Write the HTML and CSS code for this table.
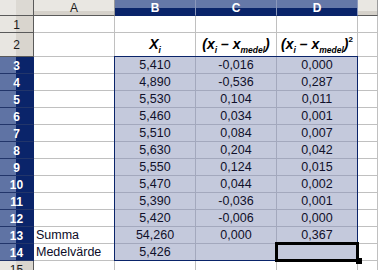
FILE: index.html
```html
<!DOCTYPE html>
<html>
<head>
<meta charset="utf-8">
<link rel="stylesheet" href="styles.css">
</head>
<body>
<div class="sheet">
  <div class="grid">
    <div class="corner"></div>
    <div class="ch">A</div>
    <div class="ch sel">B</div>
    <div class="ch sel">C</div>
    <div class="ch sel">D</div>
    <div class="ch"></div>

    <div class="rh">1</div>
    <div class="c"></div><div class="c"></div><div class="c"></div><div class="c"></div><div class="c"></div>

    <div class="rh">2</div>
    <div class="c"></div>
    <div class="c hd"><span>X<sub>i</sub></span></div>
    <div class="c hd"><span>(x<sub>i</sub> – x<sub>medel</sub>)</span></div>
    <div class="c hd"><span>(x<sub>i</sub> – x<sub>medel</sub>)<sup>2</sup></span></div>
    <div class="c"></div>

    <div class="rh sel">3</div><div class="c"></div><div class="c s">5,410</div><div class="c s">-0,016</div><div class="c s">0,000</div><div class="c"></div>
    <div class="rh sel">4</div><div class="c"></div><div class="c s">4,890</div><div class="c s">-0,536</div><div class="c s">0,287</div><div class="c"></div>
    <div class="rh sel">5</div><div class="c"></div><div class="c s">5,530</div><div class="c s">0,104</div><div class="c s">0,011</div><div class="c"></div>
    <div class="rh sel">6</div><div class="c"></div><div class="c s">5,460</div><div class="c s">0,034</div><div class="c s">0,001</div><div class="c"></div>
    <div class="rh sel">7</div><div class="c"></div><div class="c s">5,510</div><div class="c s">0,084</div><div class="c s">0,007</div><div class="c"></div>
    <div class="rh sel">8</div><div class="c"></div><div class="c s">5,630</div><div class="c s">0,204</div><div class="c s">0,042</div><div class="c"></div>
    <div class="rh sel">9</div><div class="c"></div><div class="c s">5,550</div><div class="c s">0,124</div><div class="c s">0,015</div><div class="c"></div>
    <div class="rh sel">10</div><div class="c"></div><div class="c s">5,470</div><div class="c s">0,044</div><div class="c s">0,002</div><div class="c"></div>
    <div class="rh sel">11</div><div class="c"></div><div class="c s">5,390</div><div class="c s">-0,036</div><div class="c s">0,001</div><div class="c"></div>
    <div class="rh sel">12</div><div class="c"></div><div class="c s">5,420</div><div class="c s">-0,006</div><div class="c s">0,000</div><div class="c"></div>
    <div class="rh sel">13</div><div class="c lbl">Summa</div><div class="c s">54,260</div><div class="c s">0,000</div><div class="c s">0,367</div><div class="c"></div>
    <div class="rh sel">14</div><div class="c lbl">Medelvärde</div><div class="c s">5,426</div><div class="c s"></div><div class="c s"></div><div class="c"></div>
    <div class="rh">15</div><div class="c"></div><div class="c"></div><div class="c"></div><div class="c"></div><div class="c"></div>
  </div>
  <div class="selection"></div>
  <div class="cursor"></div>
  <div class="handle"></div>
</div>
</body>
</html>
```
FILE: styles.css
```css
html, body {
  margin: 0;
  padding: 0;
  background: #fff;
  overflow: hidden;
}
.sheet {
  position: relative;
  width: 378px;
  height: 270px;
  overflow: hidden;
  font-family: "Liberation Sans", Arial, sans-serif;
}
.grid {
  display: grid;
  grid-template-columns: 34px 81px 81px 81px 81px 1fr;
  grid-template-rows: 16px 17px 24px repeat(12, 17px) 17px;
}
.grid > div {
  box-sizing: border-box;
  border-right: 1px solid #c0c0c0;
  border-bottom: 1px solid #c0c0c0;
  display: flex;
  align-items: center;
  justify-content: center;
  white-space: nowrap;
  overflow: visible;
}
.corner {
  background: linear-gradient(to right, #e9e7e3 0 16px, #dcd9d3 16px);
  border-right-color: #5a5a5a !important;
  border-bottom-color: #5a5a5a !important;
}
.ch {
  font-size: 12px;
  color: #1a1a1a;
  background: linear-gradient(to bottom, #e9e7e2 0 11px, #d5d1ca 11px);
  border-right-color: #9a9a9a !important;
  border-bottom-color: #5a5a5a !important;
}
.ch.sel {
  color: #fff;
  font-weight: bold;
  background: linear-gradient(to bottom, #6578a8 0 8px, #0a246a 8px);
  border-right-color: #8a97bb !important;
  border-bottom-color: #0a246a !important;
}
.rh {
  font-size: 12px;
  color: #1a1a1a;
  padding-top: 1px;
  background: linear-gradient(to right, #e8e6e1 0 16px, #d9d5ce 16px);
  border-right-color: #5a5a5a !important;
  border-bottom-color: #5a5a5a !important;
}
.rh.sel {
  color: #fff;
  font-weight: bold;
  background: linear-gradient(to right, #5f73a4 0 16px, #0a246a 16px);
  border-right-color: #0a246a !important;
  border-bottom-color: #22356a !important;
}
.c {
  font-size: 12.5px;
  color: #10102a;
  background: #fff;
}
.c.s {
  background: #c4c9dc;
  border-right-color: #a3a8bd;
  border-bottom-color: #a3a8bd;
}
.c.lbl {
  justify-content: flex-start;
  padding-left: 2px;
  color: #0c0c28;
}
.c.hd {
  align-items: flex-end;
  padding-bottom: 4px;
  font-size: 14px;
  font-weight: bold;
  font-style: italic;
  color: #000;
}
.c.hd sub {
  font-size: 8.5px;
  vertical-align: -4px;
  line-height: 0;
}
.c.hd sup {
  font-size: 8px;
  vertical-align: 7px;
  line-height: 0;
  font-style: normal;
}
.selection {
  position: absolute;
  left: 114px;
  top: 56px;
  width: 244px;
  height: 205px;
  box-sizing: border-box;
  border: 1px solid #0a246a;
  pointer-events: none;
}
.cursor {
  position: absolute;
  left: 275px;
  top: 242px;
  width: 84px;
  height: 20px;
  box-sizing: border-box;
  border: 3px solid #000;
}
.handle {
  position: absolute;
  left: 356px;
  top: 258px;
  width: 6px;
  height: 6px;
  background: #000;
}
```
